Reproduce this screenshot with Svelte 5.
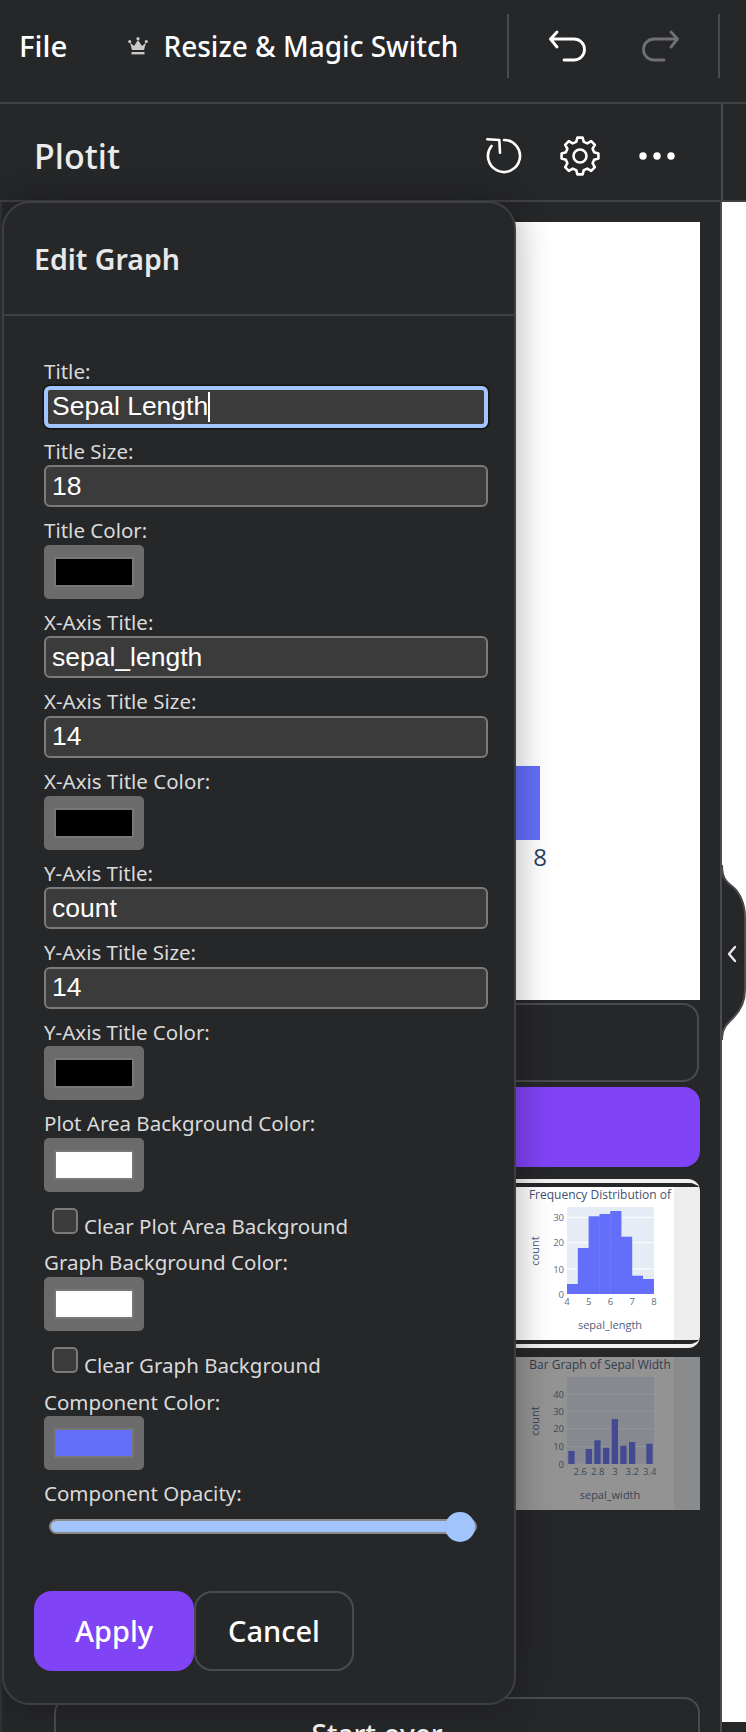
<script>
  const fields = [
    { kind: 'text', label: 'Title:', value: 'Sepal Length', focused: true },
    { kind: 'text', label: 'Title Size:', value: '18' },
    { kind: 'color', label: 'Title Color:', value: '#000000' },
    { kind: 'text', label: 'X-Axis Title:', value: 'sepal_length' },
    { kind: 'text', label: 'X-Axis Title Size:', value: '14' },
    { kind: 'color', label: 'X-Axis Title Color:', value: '#000000' },
    { kind: 'text', label: 'Y-Axis Title:', value: 'count' },
    { kind: 'text', label: 'Y-Axis Title Size:', value: '14' },
    { kind: 'color', label: 'Y-Axis Title Color:', value: '#000000' },
    { kind: 'color', label: 'Plot Area Background Color:', value: '#ffffff' },
    { kind: 'check', label: 'Clear Plot Area Background' },
    { kind: 'color', label: 'Graph Background Color:', value: '#ffffff' },
    { kind: 'check', label: 'Clear Graph Background' },
    { kind: 'color', label: 'Component Color:', value: '#636efa' }
  ];

  const histogram = {
    title: 'Frequency Distribution of',
    xTitle: 'sepal_length',
    bars: [
      [513, 11.2, 10], [523.8, 11.2, 46], [534.6, 11.2, 77.7], [545.4, 11.2, 80],
      [556.2, 11.2, 83], [567, 11.2, 57.3], [577.8, 11.2, 18.3], [588.6, 11.4, 15]
    ],
    yTicks: [['30', 30.3], ['20', 55.7], ['10', 82], ['0', 107]],
    xTicks: [['4', 513], ['5', 534.7], ['6', 556.5], ['7', 578.2], ['8', 600]]
  };

  const barGraph = {
    title: 'Bar Graph of Sepal Width',
    xTitle: 'sepal_width',
    bars: [
      [514.3, 6.3, 13], [531.7, 6.3, 15], [540.3, 6.3, 23.7], [549, 6.3, 16.3],
      [557.7, 6.3, 45], [566.3, 6.3, 18.3], [575, 6.3, 22], [592.3, 6.3, 20.3]
    ],
    yTicks: [['40', 37], ['30', 54.3], ['20', 71.7], ['10', 89.7], ['0', 107]],
    xTicks: [['2.6', 526.3], ['2.8', 543.7], ['3', 561], ['3.2', 578.3], ['3.4', 595.7]]
  };

  // 8 teeth gear outline, 40x40 box
  function gearPath() {
    const pt = (deg, r) => {
      const a = (deg * Math.PI) / 180;
      return (20 + r * Math.sin(a)).toFixed(2) + ' ' + (20 - r * Math.cos(a)).toFixed(2);
    };
    let d = '';
    for (let i = 0; i < 8; i++) {
      const a = i * 45;
      d += (i ? 'L' : 'M') + pt(a - 15, 14.6) + 'L' + pt(a - 8, 18.6) + 'L' + pt(a + 8, 18.6) + 'L' + pt(a + 15, 14.6);
    }
    return d + 'Z';
  }
</script>

{#snippet plot(g)}
  <svg class="plot" viewBox="0 0 646 154" width="646" height="154">
    <rect x="0" y="0" width="620" height="154" fill="#ffffff" />
    <rect x="620" y="0" width="26" height="154" fill="#eeeeee" />
    <text class="plot-title" x="546" y="7">{g.title}</text>
    <rect x="513" y="20" width="87" height="87" fill="#e5ecf6" />
    {#each g.yTicks as t}
      <line x1="513" x2="600" y1={t[1]} y2={t[1]} stroke="#ffffff" stroke-width="1" />
      <text class="tick end" x="510" y={t[1]}>{t[0]}</text>
    {/each}
    {#each g.bars as b}
      <rect x={b[0]} y={107 - b[2]} width={b[1]} height={b[2]} fill="#636efa" />
    {/each}
    {#each g.xTicks as t}
      <text class="tick" x={t[1]} y="114">{t[0]}</text>
    {/each}
    <text class="axis" x="556" y="137">{g.xTitle}</text>
    <text class="axis" transform="translate(480 64) rotate(-90)">count</text>
  </svg>
{/snippet}

<div class="app">
  <header class="topbar">
    <span class="file">File</span>
    <svg class="crown" viewBox="0 0 20 18" width="20" height="18">
      <circle cx="1.7" cy="4.5" r="1.6" />
      <circle cx="10" cy="1.7" r="1.6" />
      <circle cx="18.3" cy="4.5" r="1.6" />
      <path d="M2 5.500 6 9 10 3l4 6 4-3.500L16 13H4z" />
      <rect x="3.500" y="15" width="13" height="2.400" />
    </svg>
    <span class="resize">Resize &amp; Magic Switch</span>
    <div class="history">
      <i class="divider"></i>
      <svg class="arrow" viewBox="0 0 37 32" width="37" height="32">
        <path d="M8 2 1.500 9 8 17M1.500 9H25a10.500 10.500 0 0 1 0 21H15" />
      </svg>
      <svg class="arrow off" viewBox="0 0 37 32" width="37" height="32">
        <path transform="matrix(-1 0 0 1 37 0)" d="M8 2 1.500 9 8 17M1.500 9H25a10.500 10.500 0 0 1 0 21H15" />
      </svg>
      <i class="divider"></i>
    </div>
  </header>

  <div class="panel-head">
    <div class="head-main">
      <h2>Plotit</h2>
      <div class="head-icons">
        <svg class="line-icon" viewBox="0 0 36 36" width="36" height="36">
          <path d="M18 2A16 16 0 1 1 5.500 8M1.300 1.300 13.300 2 14 14.700" />
        </svg>
        <svg class="line-icon" viewBox="0 0 40 40" width="40" height="40">
          <path d={gearPath()} />
          <circle cx="20" cy="20" r="6.500" />
        </svg>
        <svg class="dots" viewBox="0 0 36 8" width="36" height="8">
          <circle cx="4" cy="4" r="3.700" />
          <circle cx="18" cy="4" r="3.700" />
          <circle cx="32" cy="4" r="3.700" />
        </svg>
      </div>
    </div>
  </div>

  <div class="workspace">
    <main class="content">
      <div class="chart">
        <svg viewBox="0 0 646 778" width="646" height="778">
          <rect x="0" y="544" width="486" height="74" fill="#636efa" />
          <text class="chart-tick" x="486" y="634">8</text>
        </svg>
      </div>
      <div class="outline-btn"></div>
      <div class="primary-btn"></div>
      <div class="thumb selected">
        <div class="thumb-inner">{@render plot(histogram)}</div>
      </div>
      <div class="thumb dimmed">{@render plot(barGraph)}</div>
      <div class="start-over">Start over</div>
    </main>

    <aside class="rail">
      <svg class="notch" viewBox="0 0 24 180" width="24" height="180">
        <path class="notch-fill" d="M0 2C0 16 5 19 11 24S23 40 23 54V127C23 140 17 149 11 155S0 165 0 177Z" />
        <path class="notch-line" d="M0 2C0 16 5 19 11 24S23 40 23 54V127C23 140 17 149 11 155S0 165 0 177" />
        <path class="chev" d="M13 84 7 91l6 7" />
      </svg>
    </aside>

    <section class="modal">
      <h3>Edit Graph</h3>
      <form class="form">
        {#each fields as f}
          {#if f.kind === 'check'}
            <label class="check-row">
              <input type="checkbox" />
              <span>{f.label}</span>
            </label>
          {:else}
            <label class="field">
              <span class="label">{f.label}</span>
              {#if f.kind === 'text'}
                <span class="text-wrap">
                  <input class="text" class:focused={f.focused} type="text" value={f.value} />
                  {#if f.focused}<i class="caret"></i>{/if}
                </span>
              {:else}
                <input class="swatch" type="color" value={f.value} />
              {/if}
            </label>
          {/if}
        {/each}
        <label class="field">
          <span class="label">Component Opacity:</span>
          <input class="range" type="range" min="0" max="1" step="0.01" value="1" />
        </label>
      </form>
      <div class="actions">
        <button class="apply" type="button">Apply</button>
        <button class="cancel" type="button">Cancel</button>
      </div>
    </section>
  </div>
</div>

<style>
  :global(body) {
    background: #262729;
  }

  .app {
    width: 746px;
    height: 1732px;
    overflow: hidden;
    background: #262729;
    color: #fff;
    font-family: "Noto Sans", sans-serif;
    display: flex;
    flex-direction: column;
  }

  .topbar {
    height: 102px;
    box-sizing: content-box;
    border-bottom: 2px solid #404144;
    padding: 0 26px 0 19px;
    display: flex;
    align-items: center;
    flex-shrink: 0;
  }
  .file,
  .resize {
    font-size: 28px;
    font-weight: 500;
    line-height: 92px;
    height: 92px;
    margin-bottom: 10px;
  }
  .file {
    font-size: 29.500px;
  }
  .crown {
    margin-left: 61px;
    margin-right: 15px;
    margin-bottom: 10px;
    fill: #c9c9c9;
  }
  .history {
    margin-left: auto;
    margin-bottom: 10px;
    display: flex;
    align-items: center;
  }
  .divider {
    width: 2px;
    height: 64px;
    background: #4a4b4e;
  }
  .arrow {
    fill: none;
    stroke: #fff;
    stroke-width: 2.8;
    stroke-linecap: round;
    stroke-linejoin: round;
    margin-left: 40px;
    margin-right: -1px;
  }
  .arrow.off {
    stroke: #707174;
    margin-left: 57px;
    margin-right: 39px;
  }

  .panel-head {
    height: 96px;
    border-bottom: 2px solid #404144;
    flex-shrink: 0;
  }
  .head-main {
    width: 723px;
    height: 96px;
    box-sizing: border-box;
    border-right: 2px solid #4a4b4e;
    padding: 8px 46px 0 34px;
    display: flex;
    align-items: center;
    justify-content: space-between;
  }
  h2 {
    margin: 0;
    font-size: 34px;
    font-weight: 500;
    color: #ececec;
  }
  .head-icons {
    display: flex;
    align-items: center;
    gap: 38px;
  }
  .line-icon {
    fill: none;
    stroke: #fff;
    stroke-width: 2.6;
    stroke-linecap: round;
    stroke-linejoin: round;
  }
  .dots {
    fill: #fff;
    margin-left: 1px;
  }

  .workspace {
    position: relative;
    flex: 1;
    display: flex;
    min-height: 0;
    border-left: 2px solid #323336;
  }

  .content {
    width: 720px;
    box-sizing: border-box;
    border-right: 2px solid #4a4b4e;
    padding: 20px 20px 0 52px;
    display: flex;
    flex-direction: column;
  }
  .chart {
    height: 778px;
    background: #fff;
    flex-shrink: 0;
  }
  .chart svg {
    display: block;
  }
  .chart-tick {
    font-family: "Open Sans", sans-serif;
    font-size: 24px;
    fill: #2a3f5f;
    text-anchor: middle;
    dominant-baseline: central;
  }
  .outline-btn {
    height: 79px;
    margin-top: 3px;
    margin-right: 1px;
    box-sizing: border-box;
    border: 2px solid #4a4b4e;
    border-radius: 16px;
    flex-shrink: 0;
  }
  .primary-btn {
    height: 80px;
    margin-top: 5px;
    background: #8043f5;
    border-radius: 16px;
    flex-shrink: 0;
  }
  .thumb {
    flex-shrink: 0;
    overflow: hidden;
  }
  .thumb svg {
    display: block;
  }
  .selected {
    margin-top: 12px;
    height: 169px;
    box-sizing: border-box;
    border-block: 4px solid #f0f0f0;
    border-radius: 12px;
  }
  .thumb-inner {
    border-block: 4px solid #262729;
    height: 161px;
    box-sizing: border-box;
    overflow: hidden;
  }
  .dimmed {
    margin-top: 9px;
    height: 153px;
  }
  .dimmed svg {
    opacity: 0.5;
  }
  .plot-title {
    font-family: "Open Sans", sans-serif;
    font-size: 12px;
    fill: #3f5170;
    text-anchor: middle;
    dominant-baseline: central;
  }
  .tick {
    font-family: "Open Sans", sans-serif;
    font-size: 9.500px;
    fill: #5a6a85;
    text-anchor: middle;
    dominant-baseline: central;
  }
  .tick.end {
    text-anchor: end;
  }
  .axis {
    font-family: "Open Sans", sans-serif;
    font-size: 11px;
    fill: #4f6080;
    text-anchor: middle;
    dominant-baseline: central;
  }
  .start-over {
    margin-top: 187px;
    height: 120px;
    flex-shrink: 0;
    box-sizing: border-box;
    border: 2px solid #4a4b4e;
    border-radius: 16px;
    text-align: center;
    font-size: 28px;
    font-weight: 500;
    line-height: 1;
    padding-top: 21px;
    color: #f4f4f4;
  }

  .rail {
    position: relative;
    flex: 1;
    height: 1520px;
    background: #fff;
  }
  .notch {
    position: absolute;
    left: 0;
    top: 661px;
    overflow: visible;
  }
  .notch-fill {
    fill: #262729;
  }
  .notch-line {
    fill: none;
    stroke: #4a4b4e;
    stroke-width: 2;
  }
  .chev {
    fill: none;
    stroke: #e8e8e8;
    stroke-width: 2.4;
    stroke-linecap: round;
    stroke-linejoin: round;
  }

  .modal {
    position: absolute;
    left: 0;
    top: -1px;
    width: 514px;
    height: 1504px;
    box-sizing: border-box;
    background: #262729;
    border: 2px solid #3e3f42;
    border-radius: 28px;
    box-shadow: 0 0 36px rgba(0, 0, 0, 0.32);
  }
  h3 {
    margin: 0;
    height: 113px;
    box-sizing: border-box;
    border-bottom: 2px solid #3e3f42;
    padding: 0 0 0 30px;
    display: flex;
    align-items: center;
    font-size: 28.500px;
    font-weight: 600;
    color: #e8e8e8;
  }
  .form {
    padding: 42px 0 0 40px;
    display: flex;
    flex-direction: column;
  }
  .field {
    display: flex;
    flex-direction: column;
    align-items: flex-start;
    margin-bottom: 10px;
  }
  .label {
    font-size: 20.500px;
    line-height: 27.6px;
    color: #dadada;
  }
  .text-wrap {
    position: relative;
    display: block;
  }
  .text {
    display: block;
    width: 444px;
    height: 42px;
    box-sizing: border-box;
    margin: 0;
    padding: 0 6px;
    background: #3b3b3b;
    border: 2px solid #7b7b7b;
    border-radius: 6px;
    color: #fff;
    font-family: "Liberation Sans", Arial, sans-serif;
    font-size: 26.500px;
    outline: none;
  }
  .text.focused {
    border: 4px solid #a0c4fb;
    padding: 0 4px;
    box-shadow: 0 0 0 1.500px #141414;
  }
  .caret {
    position: absolute;
    left: 164px;
    top: 6px;
    width: 2px;
    height: 30px;
    background: #fff;
  }
  .swatch {
    display: block;
    appearance: none;
    -webkit-appearance: none;
    width: 100px;
    height: 54px;
    box-sizing: border-box;
    margin: 0;
    padding: 12px 10px;
    border: none;
    border-radius: 5px;
    background: #6b6b6b;
  }
  .swatch::-webkit-color-swatch-wrapper {
    padding: 0;
  }
  .swatch::-webkit-color-swatch {
    border: 2px solid #777;
    border-radius: 0;
  }
  .check-row {
    display: flex;
    align-items: flex-start;
    height: 26px;
    margin: 6px 0 15.500px 8px;
    font-size: 20.500px;
    color: #dadada;
  }
  .check-row input {
    appearance: none;
    -webkit-appearance: none;
    width: 26px;
    height: 26px;
    box-sizing: border-box;
    margin: 0;
    background: #3b3b3b;
    border: 2px solid #7b7b7b;
    border-radius: 5px;
  }
  .check-row span {
    margin-left: 6px;
    line-height: 27px;
    margin-top: 5px;
  }
  .range {
    appearance: none;
    -webkit-appearance: none;
    display: block;
    width: 428px;
    height: 30px;
    margin: 4px 0 0 5px;
    background: transparent;
  }
  .range::-webkit-slider-runnable-track {
    height: 15px;
    box-sizing: border-box;
    background: #a0c4fb;
    border: 2px solid #8a8a8a;
    border-radius: 8px;
  }
  .range::-webkit-slider-thumb {
    -webkit-appearance: none;
    width: 30px;
    height: 30px;
    margin-top: -9.500px;
    border-radius: 50%;
    background: #a0c4fb;
  }
  .actions {
    display: flex;
    padding: 39px 0 0 30px;
  }
  .actions button {
    height: 80px;
    box-sizing: border-box;
    border-radius: 18px;
    font-family: "Noto Sans", sans-serif;
    font-size: 29px;
    font-weight: 500;
    color: #fff;
  }
  .apply {
    width: 160px;
    border: none;
    background: #8043f5;
  }
  .cancel {
    width: 160px;
    background: transparent;
    border: 2px solid #4a4b4e;
  }
</style>
